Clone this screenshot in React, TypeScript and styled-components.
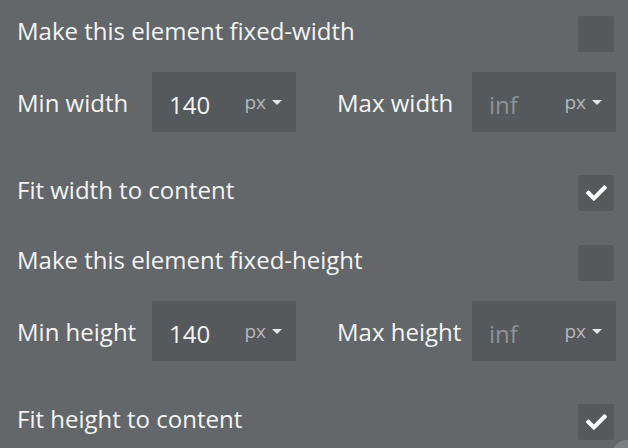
import React from 'react';
import styled, { createGlobalStyle } from 'styled-components';

// == styles =======================================================================================
const GlobalStyle = createGlobalStyle`
  html, body {
    margin: 0;
    padding: 0;
    background: #636769;
  }
  * {
    box-sizing: border-box;
  }
`;

const Panel = styled.div`
  position: relative;
  width: 628px;
  height: 448px;
  overflow: hidden;
  padding: 16px 14px 0 17px;
  background: #636769;
  color: #f4f4f4;
  font-family: "Open Sans", "Liberation Sans", sans-serif;
  font-size: 24px;
`;

const CheckRow = styled.div<{ gap: number }>`
  display: flex;
  align-items: center;
  justify-content: space-between;
  height: 36px;
  margin-bottom: ${ ( p ) => p.gap }px;
`;

const Label = styled.span`
  line-height: 36px;
  padding-bottom: 6px;
  white-space: nowrap;
`;

const Box = styled.div`
  width: 36px;
  height: 36px;
  border-radius: 3px;
  background: #55595b;
  display: flex;
  align-items: center;
  justify-content: center;
`;

const SizeRow = styled.div<{ gap: number }>`
  display: flex;
  gap: 41px;
  height: 60px;
  margin-bottom: ${ ( p ) => p.gap }px;
`;

const Field = styled.div`
  display: flex;
  align-items: center;
`;

const FieldLabel = styled.span`
  width: 135px;
  white-space: nowrap;
`;

const Input = styled.div`
  width: 144px;
  height: 60px;
  background: #55595b;
  display: flex;
  align-items: center;
  padding: 0 14px 0 17px;
`;

const Value = styled.span<{ placeholder?: boolean }>`
  flex: 1;
  padding-top: 4px;
  color: ${ ( p ) => ( p.placeholder ? '#8f9395' : '#f4f4f4' ) };
`;

const Unit = styled.span`
  display: flex;
  align-items: center;
  gap: 6px;
  font-size: 19px;
  color: #b4b7b8;
`;

const Caret = styled.span`
  width: 0;
  height: 0;
  border-left: 5px solid transparent;
  border-right: 5px solid transparent;
  border-top: 5px solid #e6e6e6;
  margin-top: 1px;
`;

const Handle = styled.div`
  position: absolute;
  left: 612px;
  top: 440px;
  width: 30px;
  height: 30px;
  border-radius: 50%;
  background: #7c8082;
`;

// == components ===================================================================================
function Check() {
  return (
    <svg width="21" height="16" viewBox="0 0 512 390" fill="#ffffff">
      <path d="M173.9 380.4L7.5 214c-10-10-10-26.2 0-36.2l36.2-36.2c10-10 26.2-10 36.2 0L192 253.7 432.1 13.6c10-10 26.2-10 36.2 0l36.2 36.2c10 10 10 26.2 0 36.2L210.1 380.4c-10 10-26.2 10-36.2 0z" />
    </svg>
  );
}

function CheckOption( { label, checked, gap }: { label: string; checked?: boolean; gap: number } ) {
  return (
    <CheckRow gap={ gap }>
      <Label>{ label }</Label>
      <Box>{ checked && <Check /> }</Box>
    </CheckRow>
  );
}

function SizeField( { label, value, placeholder }: { label: string; value: string; placeholder?: boolean } ) {
  return (
    <Field>
      <FieldLabel>{ label }</FieldLabel>
      <Input>
        <Value placeholder={ placeholder }>{ value }</Value>
        <Unit>px<Caret /></Unit>
      </Input>
    </Field>
  );
}

export default function App() {
  return (
    <>
      <GlobalStyle />
      <Panel>
        <CheckOption label="Make this element fixed-width" gap={ 20 } />
        <SizeRow gap={ 43 }>
          <SizeField label="Min width" value="140" />
          <SizeField label="Max width" value="inf" placeholder />
        </SizeRow>
        <CheckOption label="Fit width to content" checked gap={ 34 } />
        <CheckOption label="Make this element fixed-height" gap={ 20 } />
        <SizeRow gap={ 43 }>
          <SizeField label="Min height" value="140" />
          <SizeField label="Max height" value="inf" placeholder />
        </SizeRow>
        <CheckOption label="Fit height to content" checked gap={ 0 } />
        <Handle />
      </Panel>
    </>
  );
}
